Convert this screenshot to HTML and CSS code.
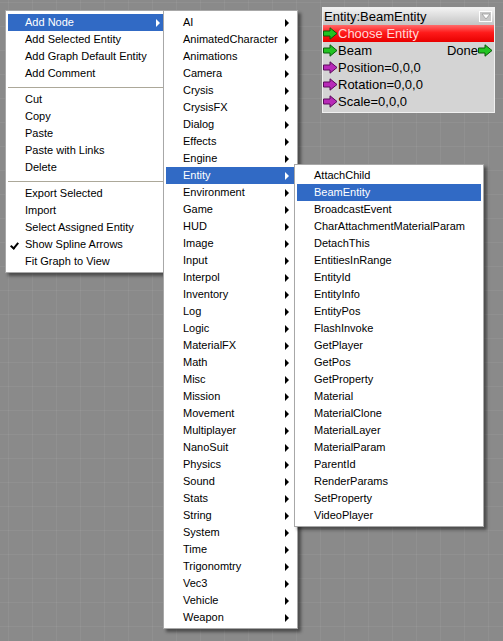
FILE: index.html
```html
<!DOCTYPE html>
<html>
<head>
<meta charset="utf-8">
<link rel="stylesheet" href="styles.css">
</head>
<body>
<div class="canvas">
  <div class="node">
    <div class="node-title"><span>Entity:BeamEntity</span><span class="dd"><svg width="10" height="8" viewBox="0 0 10 8"><path d="M1 1 L9 1 L5 6 Z" fill="#fff" stroke="#9a9a9a" stroke-width="0.8"/></svg></span></div>
    <div class="node-choose"><svg class="pin" width="15" height="13" viewBox="0 0 15 13"><path d="M0.5 4 H7 V0.8 L14 6.5 L7 12.2 V9 H0.5 Z" fill="#22c422" stroke="#0b5a0b" stroke-width="1"/></svg><span>Choose Entity</span></div>
    <div class="node-row"><span class="port"><svg class="pin" width="15" height="13" viewBox="0 0 15 13"><path d="M0.5 4 H7 V0.8 L14 6.5 L7 12.2 V9 H0.5 Z" fill="#22c422" stroke="#0b5a0b" stroke-width="1"/></svg>Beam</span><span class="port">Done<svg class="pin" width="15" height="13" viewBox="0 0 15 13"><path d="M0.5 4 H7 V0.8 L14 6.5 L7 12.2 V9 H0.5 Z" fill="#22c422" stroke="#0b5a0b" stroke-width="1"/></svg></span></div>
    <div class="node-row"><span class="port"><svg class="pin" width="15" height="13" viewBox="0 0 15 13"><path d="M0.5 4 H7 V0.8 L14 6.5 L7 12.2 V9 H0.5 Z" fill="#b82ab8" stroke="#5a0a5a" stroke-width="1"/></svg>Position=0,0,0</span></div>
    <div class="node-row"><span class="port"><svg class="pin" width="15" height="13" viewBox="0 0 15 13"><path d="M0.5 4 H7 V0.8 L14 6.5 L7 12.2 V9 H0.5 Z" fill="#b82ab8" stroke="#5a0a5a" stroke-width="1"/></svg>Rotation=0,0,0</span></div>
    <div class="node-row"><span class="port"><svg class="pin" width="15" height="13" viewBox="0 0 15 13"><path d="M0.5 4 H7 V0.8 L14 6.5 L7 12.2 V9 H0.5 Z" fill="#b82ab8" stroke="#5a0a5a" stroke-width="1"/></svg>Scale=0,0,0</span></div>
  </div>

  <div class="menu m1">
    <div class="item sub hl">Add Node</div>
    <div class="item">Add Selected Entity</div>
    <div class="item">Add Graph Default Entity</div>
    <div class="item">Add Comment</div>
    <div class="sep"></div>
    <div class="item">Cut</div>
    <div class="item">Copy</div>
    <div class="item">Paste</div>
    <div class="item">Paste with Links</div>
    <div class="item">Delete</div>
    <div class="sep"></div>
    <div class="item">Export Selected</div>
    <div class="item">Import</div>
    <div class="item">Select Assigned Entity</div>
    <div class="item checked">Show Spline Arrows</div>
    <div class="item">Fit Graph to View</div>
  </div>

  <div class="menu m2">
    <div class="item sub">AI</div>
    <div class="item sub">AnimatedCharacter</div>
    <div class="item sub">Animations</div>
    <div class="item sub">Camera</div>
    <div class="item sub">Crysis</div>
    <div class="item sub">CrysisFX</div>
    <div class="item sub">Dialog</div>
    <div class="item sub">Effects</div>
    <div class="item sub">Engine</div>
    <div class="item sub hl">Entity</div>
    <div class="item sub">Environment</div>
    <div class="item sub">Game</div>
    <div class="item sub">HUD</div>
    <div class="item sub">Image</div>
    <div class="item sub">Input</div>
    <div class="item sub">Interpol</div>
    <div class="item sub">Inventory</div>
    <div class="item sub">Log</div>
    <div class="item sub">Logic</div>
    <div class="item sub">MaterialFX</div>
    <div class="item sub">Math</div>
    <div class="item sub">Misc</div>
    <div class="item sub">Mission</div>
    <div class="item sub">Movement</div>
    <div class="item sub">Multiplayer</div>
    <div class="item sub">NanoSuit</div>
    <div class="item sub">Physics</div>
    <div class="item sub">Sound</div>
    <div class="item sub">Stats</div>
    <div class="item sub">String</div>
    <div class="item sub">System</div>
    <div class="item sub">Time</div>
    <div class="item sub">Trigonomtry</div>
    <div class="item sub">Vec3</div>
    <div class="item sub">Vehicle</div>
    <div class="item sub">Weapon</div>
  </div>

  <div class="menu m3">
    <div class="item">AttachChild</div>
    <div class="item hl">BeamEntity</div>
    <div class="item">BroadcastEvent</div>
    <div class="item">CharAttachmentMaterialParam</div>
    <div class="item">DetachThis</div>
    <div class="item">EntitiesInRange</div>
    <div class="item">EntityId</div>
    <div class="item">EntityInfo</div>
    <div class="item">EntityPos</div>
    <div class="item">FlashInvoke</div>
    <div class="item">GetPlayer</div>
    <div class="item">GetPos</div>
    <div class="item">GetProperty</div>
    <div class="item">Material</div>
    <div class="item">MaterialClone</div>
    <div class="item">MaterialLayer</div>
    <div class="item">MaterialParam</div>
    <div class="item">ParentId</div>
    <div class="item">RenderParams</div>
    <div class="item">SetProperty</div>
    <div class="item">VideoPlayer</div>
  </div>
</div>
</body>
</html>
```
FILE: styles.css
```css
html, body {
  margin: 0;
  padding: 0;
}
body {
  width: 503px;
  height: 641px;
  overflow: hidden;
  font-family: "Liberation Sans", Arial, sans-serif;
}
.canvas {
  position: relative;
  width: 503px;
  height: 641px;
  background-color: #8a8a8a;
  background-image:
    linear-gradient(to right, rgba(255,255,255,0.05) 1px, transparent 1px),
    linear-gradient(to bottom, rgba(255,255,255,0.05) 1px, transparent 1px);
  background-size: 24px 24px;
  background-position: 8px 2px;
}
.menu {
  position: absolute;
  box-sizing: border-box;
  background: #fff;
  border: 1px solid #a8a8a8;
  padding: 2px;
  font-size: 11px;
  color: #000;
  box-shadow: 3px 3px 3px rgba(0,0,0,0.45);
}
.m1 { left: 5px; top: 10px; width: 161px; padding-top: 3px; }
.m2 { left: 163px; top: 10px; width: 135px; padding-top: 3px; }
.m3 { left: 294px; top: 164px; width: 190px; }
.item {
  position: relative;
  height: 17px;
  line-height: 17px;
  padding-left: 17px;
  white-space: nowrap;
}
.item.hl {
  background: #316ac5;
  color: #fff;
}
.item.sub::after {
  content: "";
  position: absolute;
  right: 6px;
  top: 5px;
  border-top: 4px solid transparent;
  border-bottom: 4px solid transparent;
  border-left: 4px solid #000;
}
.item.sub.hl::after {
  border-left-color: #fff;
}
.m1 .item.sub::after { right: 3px; }
.item.checked::before {
  content: "";
  position: absolute;
  left: 4px;
  top: 5px;
  width: 3px;
  height: 6px;
  border-right: 2px solid #000;
  border-bottom: 2px solid #000;
  transform: rotate(40deg);
}
.sep {
  height: 0;
  margin: 5px 0 3px 0;
  border-top: 1px solid #aca899;
}

.node {
  position: absolute;
  left: 322px;
  top: 7px;
  width: 173px;
  box-sizing: border-box;
  background: #d4d4d4;
  border: 1px solid #f0f0f0;
  padding-bottom: 2px;
  font-size: 13px;
  color: #000;
}
.node-title {
  height: 17px;
  display: flex;
  align-items: center;
  justify-content: space-between;
  padding: 0 2px 0 1px;
  background: linear-gradient(to bottom, #f2f2f2, #c4c4c4);
  line-height: 17px;
}
.dd {
  width: 13px;
  height: 11px;
  box-sizing: border-box;
  border: 1px solid #fff;
  background: #c8c8c8;
  display: flex;
  align-items: center;
  justify-content: center;
}
.node-choose {
  height: 17px;
  display: flex;
  align-items: center;
  background: linear-gradient(to bottom, #ff6a6a 0%, #ff1a1a 45%, #e80000 100%);
  color: #ffd8d8;
  line-height: 17px;
}
.node-row {
  height: 17px;
  display: flex;
  align-items: center;
  justify-content: space-between;
  line-height: 17px;
  padding-right: 1px;
}
.port {
  display: flex;
  align-items: center;
}
.pin {
  display: block;
  flex: none;
}
```
